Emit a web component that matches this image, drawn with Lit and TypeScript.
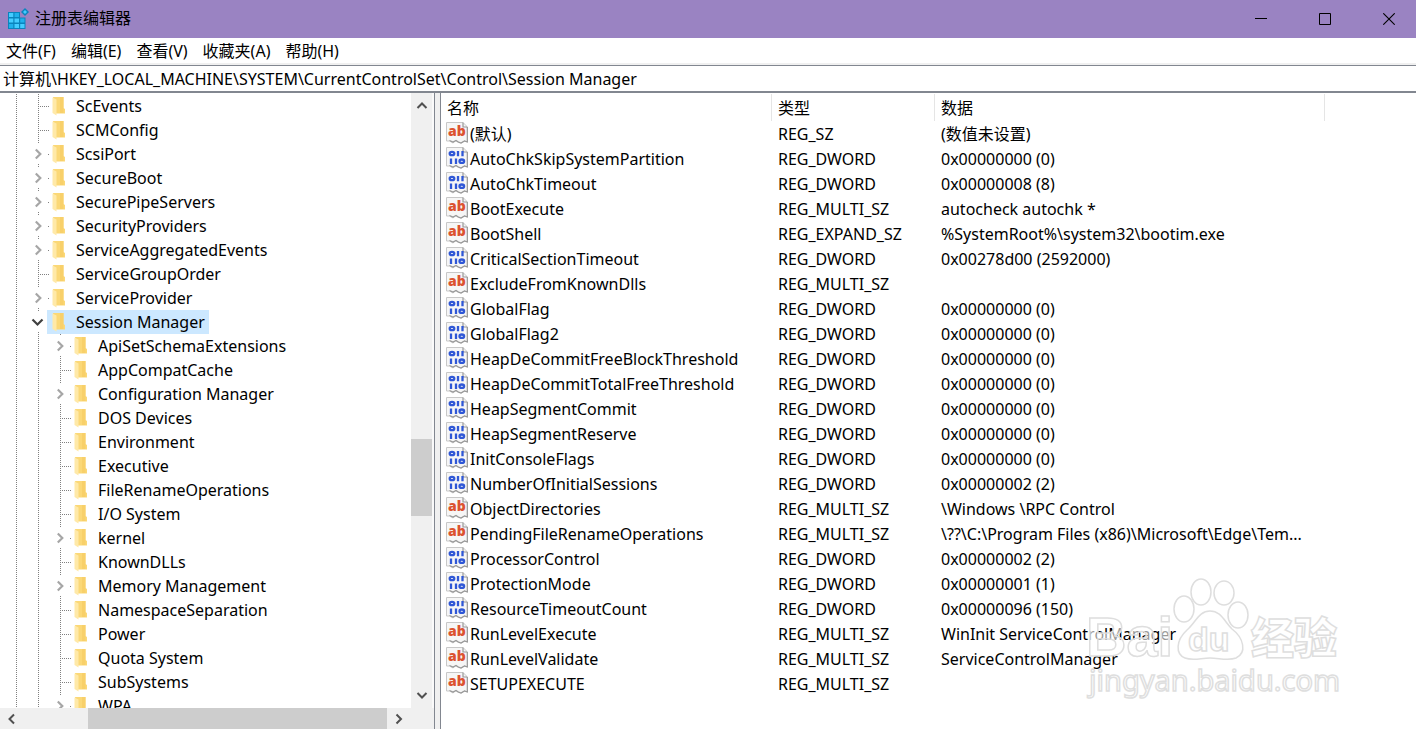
import { LitElement, html, css, svg, nothing } from "lit";
import { customElement, property } from "lit/decorators.js";

type Key = { name: string; level: 1 | 2; state?: "closed" | "open" };
type Value = { name: string; type: string; data: string };

const k = (name: string, level: 1 | 2, state?: "closed" | "open"): Key => ({ name, level, state });

const KEYS: Key[] = [
  k("ScEvents", 1),
  k("SCMConfig", 1),
  k("ScsiPort", 1, "closed"),
  k("SecureBoot", 1, "closed"),
  k("SecurePipeServers", 1, "closed"),
  k("SecurityProviders", 1, "closed"),
  k("ServiceAggregatedEvents", 1, "closed"),
  k("ServiceGroupOrder", 1),
  k("ServiceProvider", 1, "closed"),
  k("Session Manager", 1, "open"),
  k("ApiSetSchemaExtensions", 2, "closed"),
  k("AppCompatCache", 2),
  k("Configuration Manager", 2, "closed"),
  k("DOS Devices", 2),
  k("Environment", 2),
  k("Executive", 2),
  k("FileRenameOperations", 2),
  k("I/O System", 2),
  k("kernel", 2, "closed"),
  k("KnownDLLs", 2),
  k("Memory Management", 2, "closed"),
  k("NamespaceSeparation", 2),
  k("Power", 2),
  k("Quota System", 2),
  k("SubSystems", 2),
  k("WPA", 2, "closed"),
];

const v = (name: string, type: string, data = ""): Value => ({ name, type, data });

const VALUES: Value[] = [
  v("(默认)", "REG_SZ", "(数值未设置)"),
  v("AutoChkSkipSystemPartition", "REG_DWORD", "0x00000000 (0)"),
  v("AutoChkTimeout", "REG_DWORD", "0x00000008 (8)"),
  v("BootExecute", "REG_MULTI_SZ", "autocheck autochk *"),
  v("BootShell", "REG_EXPAND_SZ", "%SystemRoot%\\system32\\bootim.exe"),
  v("CriticalSectionTimeout", "REG_DWORD", "0x00278d00 (2592000)"),
  v("ExcludeFromKnownDlls", "REG_MULTI_SZ"),
  v("GlobalFlag", "REG_DWORD", "0x00000000 (0)"),
  v("GlobalFlag2", "REG_DWORD", "0x00000000 (0)"),
  v("HeapDeCommitFreeBlockThreshold", "REG_DWORD", "0x00000000 (0)"),
  v("HeapDeCommitTotalFreeThreshold", "REG_DWORD", "0x00000000 (0)"),
  v("HeapSegmentCommit", "REG_DWORD", "0x00000000 (0)"),
  v("HeapSegmentReserve", "REG_DWORD", "0x00000000 (0)"),
  v("InitConsoleFlags", "REG_DWORD", "0x00000000 (0)"),
  v("NumberOfInitialSessions", "REG_DWORD", "0x00000002 (2)"),
  v("ObjectDirectories", "REG_MULTI_SZ", "\\Windows \\RPC Control"),
  v("PendingFileRenameOperations", "REG_MULTI_SZ", "\\??\\C:\\Program Files (x86)\\Microsoft\\Edge\\Tem..."),
  v("ProcessorControl", "REG_DWORD", "0x00000002 (2)"),
  v("ProtectionMode", "REG_DWORD", "0x00000001 (1)"),
  v("ResourceTimeoutCount", "REG_DWORD", "0x00000096 (150)"),
  v("RunLevelExecute", "REG_MULTI_SZ", "WinInit ServiceControlManager"),
  v("RunLevelValidate", "REG_MULTI_SZ", "ServiceControlManager"),
  v("SETUPEXECUTE", "REG_MULTI_SZ"),
];

const MENUS = ["文件(F)", "编辑(E)", "查看(V)", "收藏夹(A)", "帮助(H)"];

const reset = css`
  * {
    box-sizing: border-box;
  }
  button {
    appearance: none;
    border: 0;
    margin: 0;
    padding: 0;
    background: none;
    color: inherit;
    font: inherit;
  }
  svg {
    display: block;
    flex: none;
  }
`;

@customElement("reg-title")
export class RegTitle extends LitElement {
  static styles = [
    reset,
    css`
      :host {
        display: flex;
        align-items: center;
        flex: none;
        height: 38px;
        padding-left: 7px;
        background: #9a83c2;
      }
      .name {
        flex: 1;
        margin: 0;
        padding: 0 0 4px 6px;
        font-size: 16px;
        font-weight: 400;
      }
      .controls {
        display: flex;
        gap: 10px;
      }
      .control {
        display: flex;
        align-items: center;
        justify-content: center;
        width: 54px;
        height: 36px;
      }
    `,
  ];
  render() {
    return html`
      <svg width="22" height="22" viewBox="0 0 22 22" aria-hidden="true">
        <path d="M1 4H13V9.5H18.5V21H1Z" fill="#0a84bd" />
        <path d="M2 5H6.3V9H2ZM2 10.5H6.3V14.5H2ZM7.5 10.5H12V14.5H7.5ZM7.5 16H12V20H7.5ZM13.2 16H17.5V20H13.2Z" fill="#44ccff" />
        <path d="M7.5 5H12V9H7.5ZM13.2 10.5H17.5V14.5H13.2ZM2 16H6.3V20H2Z" fill="#1fb0ec" />
        <path d="M18 0L22 4L18 8L14 4Z" fill="#0a84bd" />
        <path d="M18 2L20 4L18 6L16 4Z" fill="#44ccff" />
      </svg>
      <h1 class="name">注册表编辑器</h1>
      <div class="controls">
        <button class="control" aria-label="最小化">
          <svg width="12" height="12"><path d="M0 5.5H12" stroke="#000" /></svg>
        </button>
        <button class="control" aria-label="最大化">
          <svg width="12" height="12"><path d="M.5 .5H11.5V11.5H.5Z" fill="none" stroke="#000" /></svg>
        </button>
        <button class="control" aria-label="关闭">
          <svg width="12" height="12"><path d="M.3 .3L11.7 11.7M11.7 .3L.3 11.7" stroke="#000" stroke-width="1.1" /></svg>
        </button>
      </div>
    `;
  }
}

@customElement("reg-tree")
export class RegTree extends LitElement {
  static styles = [
    reset,
    css`
      :host {
        display: grid;
        grid-template-columns: minmax(0, 1fr) 21px 2px;
        grid-template-rows: minmax(0, 1fr) 21px;
        min-height: 0;
        background: #fff;
      }
      .keys {
        list-style: none;
        margin: 0;
        padding: 1px 0 0;
        overflow: hidden;
      }
      .key {
        display: flex;
        height: 24px;
      }
      .label {
        display: flex;
        align-items: center;
        padding: 0 4px 0 5px;
        white-space: pre;
        line-height: 24px;
      }
      .label.selected {
        background: #cce8ff;
      }
      .text {
        padding-left: 10px;
      }
      .vbar {
        display: flex;
        flex-direction: column;
        background: #f0f0f0;
      }
      .hbar {
        display: flex;
        grid-column: 1 / 4;
        background: #f0f0f0;
        padding-right: 23px;
      }
      .gutter {
        background: #fafafa;
      }
      .step {
        display: flex;
        align-items: center;
        justify-content: center;
        flex: none;
        width: 21px;
        height: 24px;
      }
      .hbar .step {
        width: 24px;
        height: 21px;
      }
      .track {
        display: flex;
        flex: 1;
      }
      .vbar .track {
        flex-direction: column;
      }
      .lead {
        flex: 321;
      }
      .thumb {
        flex: 77;
        background: #cdcdcd;
      }
      .trail {
        flex: 167;
      }
      .hbar .lead {
        flex: 64;
      }
      .hbar .thumb {
        flex: 299;
      }
      .hbar .trail {
        flex: 0;
      }
    `,
  ];

  guides(key: Key) {
    const x = key.level === 1 ? 38.5 : 60.5;
    const width = key.level === 1 ? 47 : 69;
    const line = (d: string) => svg`<path d=${d} stroke="#808080" stroke-dasharray="1 1" fill="none" />`;
    return html`<svg width=${width} height="24" overflow="visible" aria-hidden="true">
      ${line("M16.5 0V24")} ${key.level === 2 ? line("M38.5 0V24") : nothing}
      ${key.state
        ? line(`M${x} 0V2M${x} 22V24M${x + 9.5} 12.5h1`)
        : line(`M${x} 0V24M${x + 1.5} 12.5H${width + 2}`)}
      ${key.state === "closed"
        ? svg`<path d=${`M${x - 2.7} 7.5L${x + 1.8} 12L${x - 2.7} 16.5`} stroke="#a6a6a6" stroke-width="2.2" fill="none" />`
        : nothing}
      ${key.state === "open"
        ? svg`<path d=${`M${x - 6} 9.5L${x - 1} 14.5L${x + 4} 9.5`} stroke="#404040" stroke-width="2.2" fill="none" />`
        : nothing}
    </svg>`;
  }

  arrow(d: string) {
    return html`<svg width="12" height="12"><path d=${d} stroke="#505050" stroke-width="2" fill="none" /></svg>`;
  }

  render() {
    return html`
      <ul class="keys">
        ${KEYS.map(
          (key) => html`<li class="key">
            ${this.guides(key)}
            <span class="label ${key.state === "open" ? "selected" : ""}">
              <svg width="14" height="20" viewBox="0 0 14 20" aria-hidden="true">
                <path d="M1 1H11.5V12L13 13V17.5H4Z" fill="#fbd877" />
                <path d="M8 1H11.5V17H8Z" fill="#f8d06a" />
                <path d="M0.5 1.5L4.5 3.5V19.5L0.5 17Z" fill="#ffe9a8" />
              </svg>
              <span class="text">${key.name}</span>
            </span>
          </li>`,
        )}
      </ul>
      <div class="vbar">
        <button class="step" aria-label="向上">${this.arrow("M1.5 9L6 4.5L10.5 9")}</button>
        <div class="track"><div class="lead"></div><div class="thumb"></div><div class="trail"></div></div>
        <button class="step" aria-label="向下">${this.arrow("M1.5 3L6 7.5L10.5 3")}</button>
      </div>
      <div class="gutter"></div>
      <div class="hbar">
        <button class="step" aria-label="向左">${this.arrow("M8 1.5L3.5 6L8 10.5")}</button>
        <div class="track"><div class="lead"></div><div class="thumb"></div><div class="trail"></div></div>
        <button class="step" aria-label="向右">${this.arrow("M3.5 1.5L8 6L3.5 10.5")}</button>
      </div>
    `;
  }
}

@customElement("value-icon")
export class ValueIcon extends LitElement {
  @property() kind = "REG_SZ";
  static styles = [
    reset,
    css`
      :host {
        display: block;
        flex: none;
      }
      .glyph {
        font: 800 14px "Open Sans", sans-serif;
      }
    `,
  ];
  render() {
    const numeric = this.kind === "REG_DWORD";
    return html`<svg width="22" height="24" viewBox="0 1 22 24" aria-hidden="true">
      <path d="M.5 2.5H17L21.5 7V22L18.5 21L15 23L10 20.5L7 23L3.5 21H.5Z" fill="#f6f6f6" stroke="#c8c8c8" />
      <path d="M21.3 7V22L18.5 21L15 23L12 22L10 20.5L7 22L3.5 20.5M17 2.5V7H21" fill="none" stroke="#989898" stroke-width="1.2" />
      ${numeric
        ? svg`<g fill="none" stroke="#2f57d6" stroke-width="2.3">
            <ellipse cx="6" cy="8.5" rx="2.3" ry="1.7" /><path d="M12 6V11.300M16.5 6V11.300" />
            <path d="M5 13.500V19M10 13.500V19" /><ellipse cx="15.8" cy="16.2" rx="2.3" ry="1.7" />
          </g>`
        : svg`<text class="glyph" x="2" y="16" fill="#dc5330">ab</text>`}
    </svg>`;
  }
}

@customElement("reg-values")
export class RegValues extends LitElement {
  static styles = [
    reset,
    css`
      :host {
        display: block;
        min-width: 0;
        overflow: hidden;
        padding-top: 1px;
        background: #fff;
      }
      .values {
        border-collapse: separate;
        border-spacing: 0;
        table-layout: fixed;
        width: 884px;
      }
      .c-name {
        width: 331px;
      }
      .c-type {
        width: 163px;
      }
      th {
        height: 27px;
        padding: 0 0 0 6px;
        border-right: 1px solid #e5e5e5;
        text-align: left;
        font-weight: 400;
        line-height: 24px;
      }
      td {
        height: 25px;
        padding: 2px 0 0 6px;
        line-height: 23px;
        white-space: nowrap;
      }
      .first {
        padding: 0 0 0 5px;
      }
      .name {
        display: flex;
        gap: 2px;
        height: 25px;
      }
      .text {
        padding-top: 2px;
      }
    `,
  ];
  render() {
    return html`<table class="values">
      <colgroup><col class="c-name" /><col class="c-type" /><col /></colgroup>
      <thead>
        <tr><th>名称</th><th>类型</th><th>数据</th></tr>
      </thead>
      <tbody>
        ${VALUES.map(
          (row) => html`<tr>
            <td class="first">
              <span class="name"><value-icon .kind=${row.type}></value-icon><span class="text">${row.name}</span></span>
            </td>
            <td>${row.type}</td>
            <td>${row.data}</td>
          </tr>`,
        )}
      </tbody>
    </table>`;
  }
}

@customElement("water-mark")
export class WaterMark extends LitElement {
  static styles = css`
    :host {
      display: block;
    }
    .art {
      display: block;
      overflow: visible;
    }
    .art text,
    .art g {
      fill: #fff;
      fill-opacity: 0.6;
      stroke: #dedede;
      stroke-width: 1.5;
    }
    .word {
      font: 700 56px "Liberation Sans", sans-serif;
    }
    .small {
      font: 700 34px "Liberation Sans", sans-serif;
    }
    .han {
      font: 900 43px "Noto Sans CJK SC", sans-serif;
    }
    .site {
      font: 400 29px "Noto Sans", sans-serif;
    }
  `;
  render() {
    return html`<svg class="art" width="256" height="126" viewBox="0 0 256 126" aria-hidden="true">
      <text class="word" x="0" y="78">Bai</text>
      <g>
        <ellipse cx="115" cy="14" rx="10" ry="13" />
        <ellipse cx="138" cy="15" rx="10" ry="12" />
        <ellipse cx="98" cy="31" rx="10" ry="13" />
        <ellipse cx="152" cy="37" rx="10" ry="13" />
        <path
          d="M124 33C135 33 138 43 146 51C158 60 161 75 150 80C142 83 133 80 124 80C115 80 107 83 99 80C89 76 90 62 101 52C110 44 113 33 124 33Z"
        />
      </g>
      <text class="small" x="102" y="73">du</text>
      <text class="han" x="165" y="76">经验</text>
      <text class="site" x="3" y="113">jingyan.baidu.com</text>
    </svg>`;
  }
}

@customElement("app-root")
export class AppRoot extends LitElement {
  static styles = [
    reset,
    css`
      :host {
        position: relative;
        display: flex;
        flex-direction: column;
        height: 100vh;
        overflow: hidden;
        background: #fff;
        color: #000;
        font-family: "Noto Sans", "Noto Sans CJK SC", sans-serif;
        font-size: 16px;
      }
      .menu {
        display: flex;
        flex: none;
        gap: 15px;
        height: 27px;
        padding: 2px 6px 0;
        border-bottom: 2px solid #f0f0f0;
        line-height: 23px;
      }
      .address {
        flex: none;
        width: 100%;
        height: 28px;
        margin: 0;
        padding: 0 3px 2px;
        border: solid #828790;
        border-width: 1px 0 2px;
        outline: 0;
        background: #fff;
        color: inherit;
        font: inherit;
      }
      .panes {
        display: grid;
        flex: 1;
        grid-template-columns: 434px 7px minmax(0, 1fr);
        min-height: 0;
      }
      .splitter {
        border: solid #828790;
        border-width: 0 1px;
        background: #f0f0f0;
      }
      .mark {
        position: absolute;
        right: 74px;
        bottom: 25px;
        pointer-events: none;
      }
    `,
  ];
  render() {
    return html`
      <reg-title></reg-title>
      <nav class="menu">${MENUS.map((m) => html`<button>${m}</button>`)}</nav>
      <input
        class="address"
        aria-label="地址"
        .value=${"计算机\\HKEY_LOCAL_MACHINE\\SYSTEM\\CurrentControlSet\\Control\\Session Manager"}
      />
      <main class="panes">
        <reg-tree></reg-tree>
        <div class="splitter"></div>
        <reg-values></reg-values>
      </main>
      <water-mark class="mark"></water-mark>
    `;
  }
}
